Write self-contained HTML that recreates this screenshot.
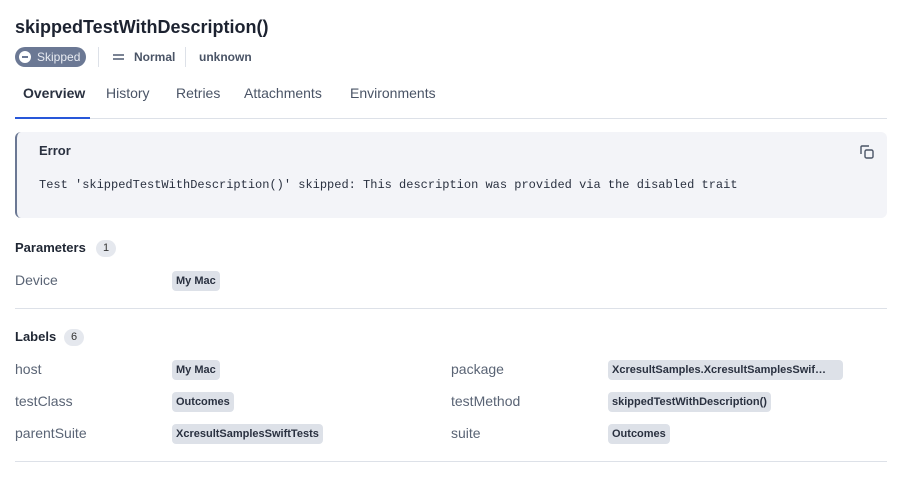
<!DOCTYPE html><html><head><style>
body{margin:0;width:904px;height:484px;background:#fff;font-family:"Liberation Sans",sans-serif;color:#1f2633;position:relative;overflow:hidden}
.a{position:absolute;white-space:nowrap}
.chip{position:absolute;background:#dde1e8;border-radius:4px;font-size:11px;font-weight:bold;color:#2a3140;height:20px;line-height:20px;padding:0 4px}
.lbl{position:absolute;font-size:14px;color:#5a6475}
.hr{position:absolute;left:15px;width:872px;height:1px;background:#dde1e8}
.cnt{position:absolute;background:#e5e8ee;border-radius:9px;font-size:11px;height:17px;line-height:17px;width:20px;text-align:center;color:#333}
</style></head><body>
<div class="a" style="left:15px;top:17px;font-size:18px;font-weight:bold;color:#1c2230">skippedTestWithDescription()</div>
<div class="a" style="left:15px;top:47px;width:71px;height:20px;border-radius:10px;background:#6b7894"></div>
<div class="a" style="left:19px;top:51px;width:12px;height:12px;border-radius:50%;background:#fff"></div>
<div class="a" style="left:22px;top:56px;width:6px;height:2px;background:#6b7894"></div>
<div class="a" style="left:37px;top:50px;font-size:12px;color:#e8ebf2">Skipped</div>
<div class="a" style="left:98px;top:47px;width:1px;height:20px;background:#dde1e8"></div>
<div class="a" style="left:113px;top:54px;width:11px;height:2px;background:#7a8394"></div>
<div class="a" style="left:113px;top:58px;width:11px;height:2px;background:#7a8394"></div>
<div class="a" style="left:134px;top:50px;font-size:12px;font-weight:bold;color:#4a5466">Normal</div>
<div class="a" style="left:185px;top:47px;width:1px;height:20px;background:#dde1e8"></div>
<div class="a" style="left:199px;top:50px;font-size:12px;font-weight:bold;color:#4a5466">unknown</div>
<div class="a" style="left:23px;top:85px;font-size:14px;font-weight:bold;color:#2a3140">Overview</div>
<div class="a" style="left:106px;top:85px;font-size:14px;color:#4a5466">History</div>
<div class="a" style="left:176px;top:85px;font-size:14px;color:#4a5466">Retries</div>
<div class="a" style="left:244px;top:85px;font-size:14px;color:#4a5466">Attachments</div>
<div class="a" style="left:350px;top:85px;font-size:14px;color:#4a5466">Environments</div>
<div class="hr" style="top:118px;height:1px"></div>
<div class="a" style="left:15px;top:117px;width:75px;height:2px;background:#2857d9"></div>
<div class="a" style="left:15px;top:132px;width:872px;height:86px;background:#f3f4f8;border-radius:6px;border-left:2px solid #6b7894;box-sizing:border-box"></div>
<div class="a" style="left:39px;top:143px;font-size:13px;font-weight:bold;color:#2a3140">Error</div>
<svg class="a" style="left:858px;top:143px" width="18" height="18" viewBox="0 0 18 18" fill="none" stroke="#4a5466" stroke-width="1.4"><path d="M3 11V4a1 1 0 0 1 1-1h7"/><rect x="7" y="7" width="8" height="8" rx="1.5"/></svg>
<div class="a" style="left:39px;top:178px;font-size:12px;font-family:'Liberation Mono',monospace;color:#2a3140">Test 'skippedTestWithDescription()' skipped: This description was provided via the disabled trait</div>
<div class="a" style="left:15px;top:240px;font-size:13px;font-weight:bold">Parameters</div>
<div class="cnt" style="left:96px;top:240px">1</div>
<div class="lbl" style="left:15px;top:272px">Device</div>
<div class="chip" style="left:172px;top:271px">My Mac</div>
<div class="hr" style="top:308px"></div>
<div class="a" style="left:15px;top:329px;font-size:13px;font-weight:bold">Labels</div>
<div class="cnt" style="left:64px;top:329px">6</div>
<div class="lbl" style="left:15px;top:361px">host</div>
<div class="chip" style="left:172px;top:360px">My Mac</div>
<div class="lbl" style="left:15px;top:393px">testClass</div>
<div class="chip" style="left:172px;top:392px">Outcomes</div>
<div class="lbl" style="left:15px;top:425px">parentSuite</div>
<div class="chip" style="left:172px;top:424px">XcresultSamplesSwiftTests</div>
<div class="lbl" style="left:451px;top:361px">package</div>
<div class="chip" style="left:608px;top:360px;width:227px;overflow:hidden">XcresultSamples.XcresultSamplesSwif…</div>
<div class="lbl" style="left:451px;top:393px">testMethod</div>
<div class="chip" style="left:608px;top:392px">skippedTestWithDescription()</div>
<div class="lbl" style="left:451px;top:425px">suite</div>
<div class="chip" style="left:608px;top:424px">Outcomes</div>
<div class="hr" style="top:461px"></div>
</body></html>
